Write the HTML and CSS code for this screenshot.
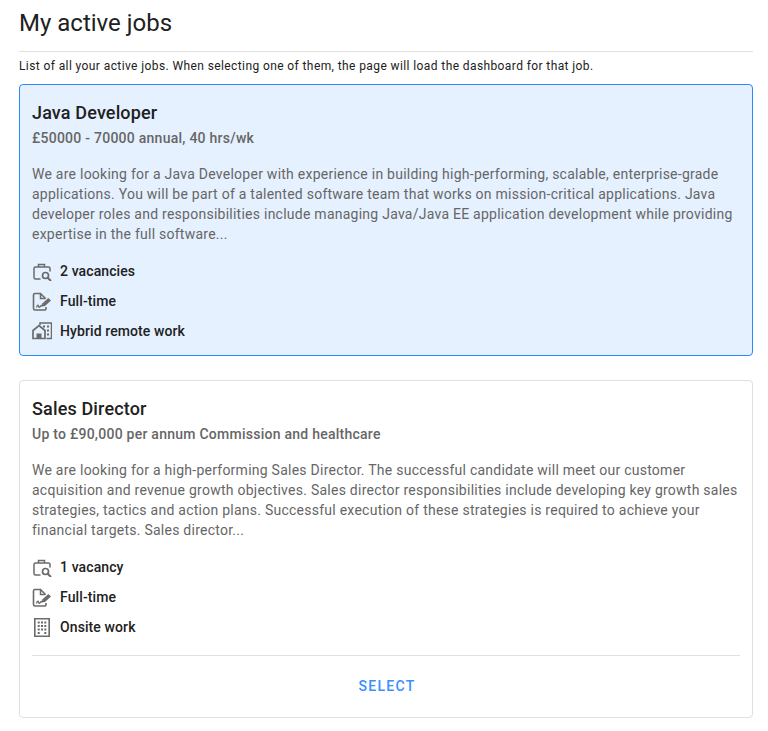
FILE: index.html
```html
<!DOCTYPE html>
<html lang="en">
<head>
    <meta charset="UTF-8">
    <meta name="viewport" content="width=device-width, initial-scale=1.0">
    <title>My active jobs</title>
    <link rel="stylesheet" href="styles.css">
</head>
<body>
    <svg class="icon-defs" aria-hidden="true">
        <symbol id="icon-vacancy" viewBox="0 0 20 20">
            <path d="M6.500 6V3.500h6V6M8.500 18H3.500A1.500 1.500 0 0 1 2 16.500V7.500A1.500 1.500 0 0 1 3.500 6h13A1.500 1.500 0 0 1 18 7.500V10.500" fill="none" stroke="currentColor" stroke-width="1.500"/>
            <circle cx="13.500" cy="14.500" r="3" fill="none" stroke="currentColor" stroke-width="1.700"/>
            <path d="M15.500 16.500l3.500 3.500" fill="none" stroke="currentColor" stroke-width="2"/>
        </symbol>
        <symbol id="icon-contract" viewBox="0 0 20 20">
            <path d="M13 8V7L8.500 2.500H3A1.500 1.500 0 0 0 1.500 4v13.500A1.500 1.500 0 0 0 3 19h9.500a1.500 1.500 0 0 0 1.500-1.500V16" fill="none" stroke="currentColor" stroke-width="1.600"/>
            <path d="M8.500 3v4.500H13" fill="none" stroke="currentColor" stroke-width="1.500"/>
            <path d="M4.500 16.500c.8-2.600 1.600-3 2-1.500s1.200 1.700 2 .3 1-.8 1.800 0" fill="none" stroke="currentColor" stroke-width="1.300"/>
            <path d="M9.500 15.500l.8-3 6-5.500 2.700 2.500-6 5.500z" fill="currentColor"/>
        </symbol>
        <symbol id="icon-hybrid" viewBox="0 0 20 20">
            <path d="M8 4V2h11.500v15.500h-5" fill="none" stroke="currentColor" stroke-width="1.500"/>
            <path d="M1 17.500V9.500L7 4.500l6 5v8z" fill="none" stroke="currentColor" stroke-width="1.700"/>
            <path d="M4.500 17.500v-5h5v5z" fill="currentColor"/>
            <path d="M11 4.500h2v2h-2zM15 4.500h2v2h-2zM15 8.500h2v2h-2zM15 12.500h2v2h-2z" fill="currentColor"/>
        </symbol>
        <symbol id="icon-onsite" viewBox="0 0 20 20">
            <path d="M2.800 1.800h14.400v17.400H2.800z" fill="none" stroke="currentColor" stroke-width="1.600"/>
            <path d="M5.700 4.500h2v2h-2zM9 4.500h2v2H9zM12.300 4.500h2v2h-2zM5.700 8h2v2h-2zM9 8h2v2H9zM12.300 8h2v2h-2zM5.700 11.500h2v2h-2zM9 11.500h2v2H9zM12.300 11.500h2v2h-2zM5.700 15h2v2h-2zM12.300 15h2v2h-2z" fill="currentColor"/>
        </symbol>
    </svg>

    <div class="container">
        <h1>My active jobs</h1>
        <p class="intro">List of all your active jobs. When selecting one of them, the page will load the dashboard for that job.</p>

        <div class="job active">
            <h2>Java Developer</h2>
            <p class="salary">£50000 - 70000 annual, 40 hrs/wk</p>
            <p class="description">We are looking for a Java Developer with experience in building high-performing, scalable, enterprise-grade applications. You will be part of a talented software team that works on mission-critical applications. Java developer roles and responsibilities include managing Java/Java EE application development while providing expertise in the full software...</p>
            <ul class="meta">
                <li><svg class="icon"><use href="#icon-vacancy"/></svg>2 vacancies</li>
                <li><svg class="icon"><use href="#icon-contract"/></svg>Full-time</li>
                <li><svg class="icon"><use href="#icon-hybrid"/></svg>Hybrid remote work</li>
            </ul>
        </div>

        <div class="job">
            <h2>Sales Director</h2>
            <p class="salary">Up to £90,000 per annum Commission and healthcare</p>
            <p class="description">We are looking for a high-performing Sales Director. The successful candidate will meet our customer acquisition and revenue growth objectives. Sales director responsibilities include developing key growth sales strategies, tactics and action plans. Successful execution of these strategies is required to achieve your financial targets. Sales director...</p>
            <ul class="meta">
                <li><svg class="icon"><use href="#icon-vacancy"/></svg>1 vacancy</li>
                <li><svg class="icon"><use href="#icon-contract"/></svg>Full-time</li>
                <li><svg class="icon"><use href="#icon-onsite"/></svg>Onsite work</li>
            </ul>
            <div class="actions">
                <button type="button">Select</button>
            </div>
        </div>
    </div>
</body>
</html>
```

FILE: styles.css
```css
body {
    font-family: Roboto, Arial, sans-serif;
    margin: 0;
    padding: 0;
    background-color: #fff;
    color: #212121;
}
.icon-defs {
    display: none;
}
.container {
    padding: 0 15px 14px 19px;
}
h1 {
    margin: 0;
    padding: 7px 0 12px;
    font-size: 24px;
    line-height: 32px;
    font-weight: 400;
    border-bottom: 1px solid #e0e0e0;
}
.intro {
    margin: 6px 0 10px;
    font-size: 12px;
    line-height: 16px;
    letter-spacing: 0.4px;
}
.job {
    margin-bottom: 24px;
    padding: 16px 12px 9px;
    background: #fff;
    border: 1px solid #e0e0e0;
    border-radius: 4px;
}
.job.active {
    background-color: #e5f1ff;
    border-color: #2e89ff;
}
h2 {
    margin: 0;
    font-size: 18px;
    line-height: 24px;
    font-weight: 500;
    letter-spacing: 0.15px;
}
.salary {
    margin: 3px 0 0;
    font-size: 14px;
    line-height: 20px;
    font-weight: 500;
    color: #666;
    letter-spacing: 0.25px;
}
.description {
    margin: 16px 0 0;
    font-size: 14px;
    line-height: 20px;
    color: #666;
    letter-spacing: 0.25px;
}
.meta {
    list-style: none;
    margin: 12px 0 0;
    padding: 0;
}
.meta li {
    display: flex;
    align-items: center;
    gap: 8px;
    height: 30px;
    font-size: 14px;
    font-weight: 500;
    letter-spacing: 0.1px;
}
.icon {
    width: 20px;
    height: 20px;
    color: #6b6b6b;
}
.actions {
    margin-top: 13px;
    padding-top: 12px;
    padding-bottom: 4px;
    border-top: 1px solid #e0e0e0;
    text-align: center;
}
.actions button {
    margin-left: 2px;
    padding: 8px 16px;
    background: none;
    border: none;
    font-family: inherit;
    font-size: 14px;
    line-height: 20px;
    font-weight: 500;
    letter-spacing: 1.25px;
    text-transform: uppercase;
    color: #3a8fff;
    cursor: pointer;
}
```
